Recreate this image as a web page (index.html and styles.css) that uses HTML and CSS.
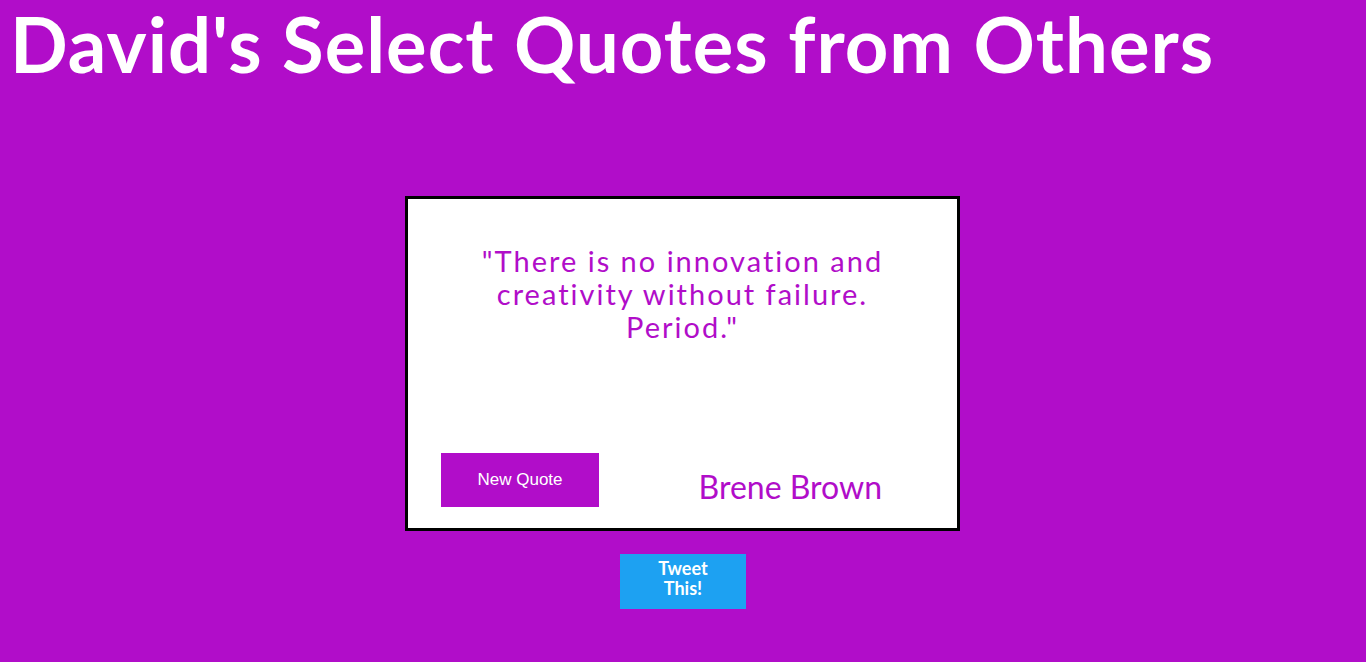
FILE: index.html
```html
<!DOCTYPE html>
<html lang="en">
<head>
<meta charset="utf-8">
<title>David's Select Quotes from Others</title>
<link rel="stylesheet" href="styles.css">
</head>
<body>
<h1 class="title">David's Select Quotes from Others</h1>
<main class="stage">
  <section class="card">
    <p class="quote">"There is no innovation and creativity without failure. Period."</p>
    <div class="card-foot">
      <button class="new-quote" type="button">New Quote</button>
      <span class="author">Brene Brown</span>
    </div>
  </section>
  <a class="tweet" href="#">Tweet<br>This!</a>
</main>
</body>
</html>
```

FILE: styles.css
```css
html, body {
  margin: 0;
  padding: 0;
}
body {
  background: #b10dc9;
  font-family: Lato, "Open Sans", sans-serif;
  min-height: 662px;
}
.title {
  margin: 0;
  padding: 0 0 0 10px;
  color: #fff;
  font-family: Lato, sans-serif;
  font-weight: 700;
  font-size: 76px;
  line-height: 88px;
  letter-spacing: 1px;
}
.stage {
  display: flex;
  flex-direction: column;
  align-items: center;
  padding-top: 108px;
}
.card {
  box-sizing: border-box;
  width: 555px;
  height: 335px;
  border: 3px solid #000;
  background: #fff;
  display: flex;
  flex-direction: column;
  justify-content: space-between;
  padding: 45px 0 21px;
  margin-left: -1px;
}
.quote {
  margin: 0 auto;
  width: 440px;
  text-align: center;
  color: #b10dc9;
  font-family: Lato, sans-serif;
  font-size: 29px;
  line-height: 33px;
  letter-spacing: 2px;
}
.card-foot {
  display: flex;
  justify-content: space-between;
  align-items: flex-end;
  padding: 0 75px 0 33px;
}
.new-quote {
  width: 158px;
  height: 54px;
  border: 0;
  background: #b10dc9;
  color: #fff;
  font-family: "Liberation Sans", Arial, sans-serif;
  font-size: 17px;
  padding: 0;
}
.author {
  color: #b10dc9;
  font-family: Lato, sans-serif;
  font-size: 32px;
  line-height: 40px;
}
.tweet {
  box-sizing: border-box;
  margin-top: 23px;
  width: 126px;
  height: 55px;
  padding-bottom: 8px;
  background: #1da1f2;
  color: #fff;
  text-decoration: none;
  font-family: Lato, sans-serif;
  font-weight: 700;
  font-size: 18px;
  line-height: 20px;
  text-align: center;
  display: flex;
  align-items: center;
  justify-content: center;
}
```
